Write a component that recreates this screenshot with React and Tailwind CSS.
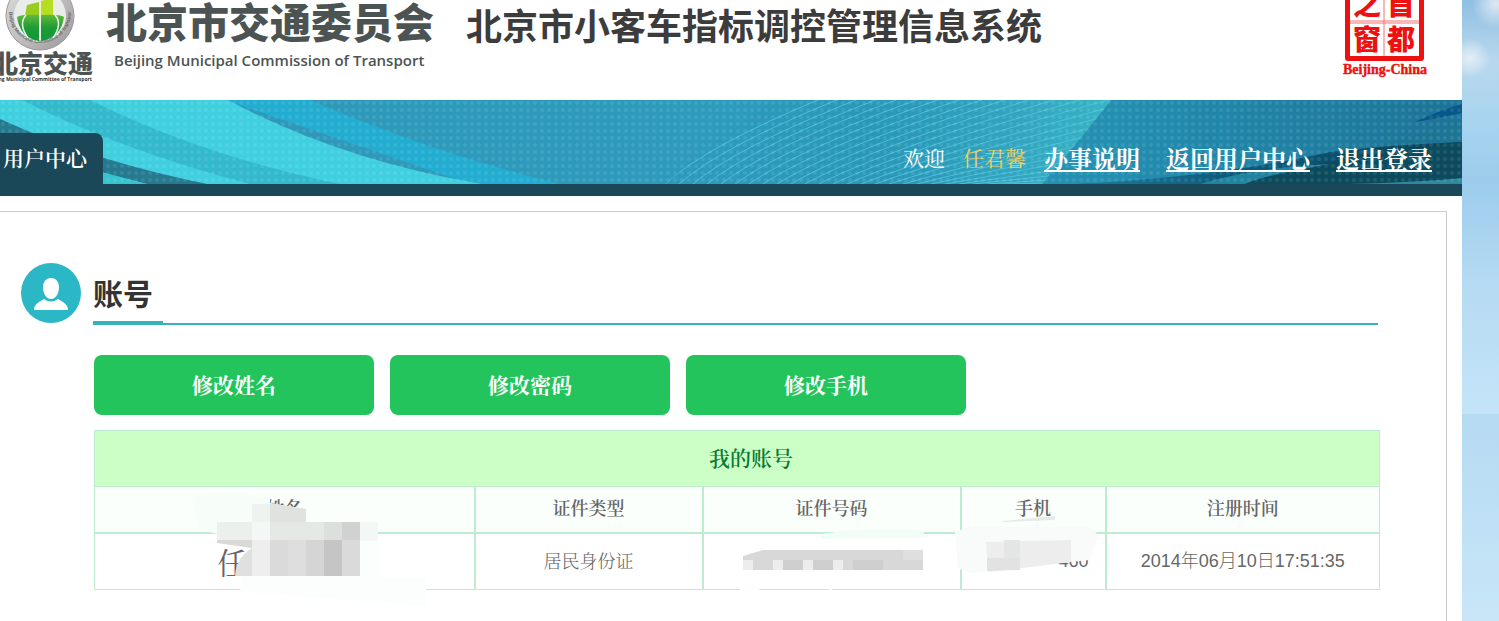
import React from "react";

const NAV_LINKS = ["办事说明", "返回用户中心", "退出登录"];
const ACTIONS = ["修改姓名", "修改密码", "修改手机"];
const LINES = Array.from({ length: 28 }, (_, i) => i);

const SONG = "font-['Noto_Serif_CJK_SC','Noto_Sans_CJK_SC',serif]";
const HEAD_CELL = "border-2 border-[#bdecd3] first:border-l last:border-r";
const BODY_CELL = "border-2 border-b border-[#bdecd3] first:border-l last:border-r";

const Emblem = () => (
  <svg width="94" height="84" viewBox="0 0 94 84" className="shrink-0">
    <defs>
      <linearGradient id="ring" x1="0" y1="0" x2="1" y2="1">
        <stop offset="0" stopColor="#dcdcdc" />
        <stop offset="0.5" stopColor="#c2c1c1" />
        <stop offset="1" stopColor="#999696" />
      </linearGradient>
      <linearGradient id="leaf" x1="0" y1="0" x2="0" y2="1">
        <stop offset="0" stopColor="#5fbb3a" />
        <stop offset="0.5" stopColor="#1f9a35" />
        <stop offset="1" stopColor="#0d9a3a" />
      </linearGradient>
    </defs>
    <circle cx="40" cy="16" r="34" fill="url(#ring)" stroke="#9a9898" strokeWidth="1" />
    <circle cx="40" cy="16" r="26" fill="#e9ece9" />
    <path id="arc" d="M9 12A31 31 0 0 0 71 12" fill="none" />
    <text fontSize="5" fontWeight="700" fill="#6b6868" fontFamily="Liberation Sans, sans-serif">
      <textPath href="#arc">Beijing Municipal Committee of Transport</textPath>
    </text>
    <path d="M27 5L39 2V16H25Z" fill="#98cc1e" />
    <path d="M41 1L53 -2V15H41Z" fill="#b5de20" />
    <path d="M17 17Q22 14 39 15V41Q20 38 17 17Z" fill="url(#leaf)" />
    <path d="M41 15Q60 14 64 17Q61 38 41 41Z" fill="url(#leaf)" />
    <path d="M26 15Q18 24 28 38M55 15Q63 24 53 38" stroke="#e8f6e8" strokeWidth="1.500" fill="none" />
    <text x="93" y="73" textAnchor="end" fontSize="25" fontWeight="900" fill="#4c5453" fontFamily="Noto Sans CJK SC, sans-serif">
      北京交通
    </text>
    <text x="92" y="81" textAnchor="end" fontSize="5" fontWeight="700" fill="#333" fontFamily="Open Sans, sans-serif">
      Beijing Municipal Committee of Transport
    </text>
  </svg>
);

const Seal = () => (
  <svg width="90" height="78" viewBox="0 0 90 78" className="shrink-0" fill="#ee1111">
    <path d="M5 -20H84V58Q84 61 81 61H8Q5 61 5 58Z" />
    <path d="M10 -20H79V56H10Z" fill="#fff" />
    <path d="M10 21H79M10 23H79M44 -20V56" stroke="#f47070" strokeWidth="1" />
    <g fontSize="28" fontWeight="900" fontFamily="Noto Sans CJK SC, sans-serif" textAnchor="middle">
      <text x="27" y="15">之</text>
      <text x="61" y="15">首</text>
      <text x="27" y="50">窗</text>
      <text x="61" y="50">都</text>
    </g>
    <text x="45" y="74" textAnchor="middle" fontSize="14" fontWeight="700" stroke="#ee1111" strokeWidth="0.4" fontFamily="Liberation Serif, serif">
      Beijing-China
    </text>
  </svg>
);

const BannerArt = () => (
  <svg
    className="absolute inset-0 h-full w-full"
    viewBox="0 0 1462 84"
    preserveAspectRatio="none"
    aria-hidden="true"
  >
    <defs>
      <linearGradient id="sea" x1="0" y1="0" x2="1" y2="0">
        <stop offset="0" stopColor="#2d97b8" />
        <stop offset="0.5" stopColor="#2d9bbd" />
        <stop offset="0.75" stopColor="#2390b2" />
        <stop offset="1" stopColor="#1c7397" />
      </linearGradient>
      <linearGradient id="deep" x1="0" y1="0" x2="1" y2="0">
        <stop offset="0" stopColor="#1d7c9e" />
        <stop offset="0.4" stopColor="#0b5a7c" />
        <stop offset="1" stopColor="#0a4357" />
      </linearGradient>
      <linearGradient id="fade" x1="0" y1="0" x2="1" y2="0">
        <stop offset="0" stopColor="#41b5cf" stopOpacity="0" />
        <stop offset="1" stopColor="#42c4cf" stopOpacity="0.7" />
      </linearGradient>
      <pattern id="dots" width="7" height="7" patternUnits="userSpaceOnUse">
        <circle cx="3" cy="3" r="2" fill="#fff" opacity="0.09" />
      </pattern>
      <clipPath id="fan">
        <path d="M665 84Q720 35 775 0H1111Q1080 40 1042 84Z" />
      </clipPath>
    </defs>
    <path d="M0 0H1462V84H0Z" fill="url(#sea)" />
    <path d="M225 0H310Q430 52 560 84H470Z" fill="#22acd0" />
    <path d="M0 0H228Q340 60 482 84H0Z" fill="#3fcfdf" />
    <path d="M22 0H90Q200 55 340 84H250Q120 50 22 0Z" fill="#33b9cc" />
    <path d="M0 19Q90 60 207 84H147Q70 65 0 40Z" fill="#257a90" />
    <path d="M0 40Q70 65 147 84H0Z" fill="#35c5cf" />
    <g clipPath="url(#fan)">
      <path d="M860 0H1111V84H860Z" fill="url(#fade)" />
      <g fill="none" stroke="#50c3da" strokeWidth="1" opacity="0.9">
        {LINES.map((i) => (
          <path key={i} d={`M${665 + i * 14} 84Q${745 + i * 14} ${i * 3 + 10} 1130 ${i * 8 - 110}`} />
        ))}
      </g>
    </g>
    <path d="M1075 84Q1290 76 1462 22V84Z" fill="#1d7595" />
    <path d="M1080 84Q1230 75 1330 52Q1400 44 1462 42V84Z" fill="url(#deep)" />
    <path d="M1200 84Q1330 60 1462 42V78Q1340 84 1320 84Z" fill="#0b4b5d" />
    <path d="M1200 84Q1250 68 1330 64Q1260 76 1245 84Z" fill="#2183a0" />
    <path d="M1350 84Q1420 82 1462 78V84Z" fill="#2f87a0" />
    <path d="M1415 22Q1440 10 1462 4V13Q1440 18 1415 22Z" fill="#06578a" />
    <path d="M0 0H1462V84H0Z" fill="url(#dots)" />
  </svg>
);

const UserBadge = () => (
  <svg width="60" height="60" viewBox="0 0 60 60" className="shrink-0" aria-hidden="true">
    <circle cx="30" cy="30" r="30" fill="#2cb7c6" />
    <path
      d="M30 15C35 15 38 19 38 24C38 30 35 36 30 36C25 36 22 30 22 24C22 19 25 15 30 15ZM13 47C13 42 16 40 23 36Q30 41 37 36C44 40 47 42 47 47Z"
      fill="#fff"
    />
  </svg>
);

// patches that hide the personal details
const NameMask = () => (
  <svg
    className="absolute -top-11 left-1/2 z-10 -translate-x-1/2"
    width="300"
    height="118"
    viewBox="134 490 300 118"
    aria-hidden="true"
  >
    <path d="M192 497Q235 490 252 497H270V503L306 509V522H378V540H245L200 530Z" fill="#f7fdf9" />
    <path d="M217 522H378V541H217Z" fill="#f3f7f5" />
    <path d="M246 541H380V577H426V606L240 592Z" fill="#fcfefd" />
    <path d="M252 504H270V522H252Z" fill="#eef3f0" />
    <path d="M270 503L306 509V522H270Z" fill="#dfe2df" />
    <path d="M217 522H252V540H217Z" fill="#ebf0ed" />
    <path d="M270 522H342V540H270Z" fill="#e4e9e6" />
    <path d="M324 522H342V540H324Z" fill="#dce0dd" />
    <path d="M342 522H360V540H342Z" fill="#cfd2d0" />
    <path d="M217 540H252V548L217 543Z" fill="#d9d9d9" />
    <path d="M252 548Q236 558 235 576H252Z" fill="#e0e0e0" />
    <path d="M252 540H270V576H252Z" fill="#eeeeef" />
    <path d="M270 540H288V576H270Z" fill="#dadada" />
    <path d="M288 540H306V576H288Z" fill="#dedede" />
    <path d="M306 540H324V576H306Z" fill="#d6d5d5" />
    <path d="M324 540H342V576H324Z" fill="#c5c5c5" />
    <path d="M342 540H360V576H342Z" fill="#dadada" />
  </svg>
);

const IdMask = () => (
  <svg
    className="absolute -top-1 left-1/2 z-10 -translate-x-1/2"
    width="200"
    height="62"
    viewBox="731 530 200 62"
    aria-hidden="true"
  >
    <path d="M820 534L850 530H920L927 538L820 539Z" fill="#f3fdf8" />
    <path d="M740 588L752 583L760 591L738 591ZM822 585L836 583L830 591Z" fill="#fdfefd" />
    <path d="M742 556L762 550H922V570H742Z" fill="#d8d8d8" />
    <path d="M742 560H752V570H742ZM772 560H782V570H772ZM802 560H812V570H802ZM832 560H842V570H832Z" fill="#ededed" />
    <path d="M782 560H802V570H782ZM812 560H832V570H812ZM852 560H882V570H852Z" fill="#cfcfcf" />
    <path d="M902 550H922V560H902Z" fill="#dfdfdf" />
  </svg>
);

const PhoneMask = () => (
  <svg
    className="absolute -top-5 left-1/2 z-10 -translate-x-1/2"
    width="162"
    height="70"
    viewBox="952 514 162 70"
    aria-hidden="true"
  >
    <path d="M1003 521L1055 516V520L1003 522Z" fill="#e6ebe8" />
    <path d="M955 532L970 527H1090L1098 535L1090 560L1060 563L970 573L958 568Z" fill="#f8fbfa" />
    <path d="M986 542L1071 540V562L988 572Z" fill="#ededee" />
    <path d="M1004 540H1020V558H1004Z" fill="#e4e5e5" />
    <path d="M987 558H1020V570L987 571Z" fill="#e2e2e2" />
  </svg>
);

const AccountTable = () => (
  <table
    className={`mt-[15px] w-full table-fixed border-collapse text-center text-lg text-[#666] ${SONG}`}
  >
    <colgroup>
      <col className="w-[380px]" />
      <col className="w-[228px]" />
      <col className="w-[258px]" />
      <col className="w-[145px]" />
      <col className="w-[274px]" />
    </colgroup>
    <thead>
      <tr className="h-14 bg-[#ccffc6] text-[21px] text-[#0a7a33]">
        <th colSpan={5} className="border border-[#bdecd3] pb-[2px] pl-7 font-semibold">
          我的账号
        </th>
      </tr>
      <tr className="h-[46px] bg-[#fafffb]">
        {["姓名", "证件类型", "证件号码", "手机", "注册时间"].map((label) => (
          <th key={label} className={`border-t pb-1 font-semibold ${HEAD_CELL}`}>
            {label}
          </th>
        ))}
      </tr>
    </thead>
    <tbody>
      <tr className="h-[57px] bg-white">
        <td className={`relative text-3xl ${BODY_CELL}`}>
          <span className="pr-26">任</span>
          <NameMask />
        </td>
        <td className={`pb-[2px] font-light ${BODY_CELL}`}>居民身份证</td>
        <td className={`relative ${BODY_CELL}`}>
          <IdMask />
        </td>
        <td className={`relative pr-4 text-right font-['Liberation_Sans',sans-serif] ${BODY_CELL}`}>
          460
          <PhoneMask />
        </td>
        <td className={`font-['Liberation_Sans','Noto_Sans_CJK_SC',sans-serif] font-light ${BODY_CELL}`}>
          2014年06月10日17:51:35
        </td>
      </tr>
    </tbody>
  </table>
);

const App = () => (
  <div className="flex min-h-screen overflow-hidden font-['Noto_Sans_CJK_SC',sans-serif]">
    <div className="flex min-w-0 flex-1 flex-col bg-white">
      <header className="flex h-[100px] items-start justify-between overflow-hidden pr-8">
        <div className="flex">
          <Emblem />
          <div className="ml-3 text-[#4c5453]">
            <p className="text-[41px] leading-10 font-black whitespace-nowrap">北京市交通委员会</p>
            <p className="mt-2 pl-2 font-['Open_Sans',sans-serif] text-[15px] leading-6 font-semibold whitespace-nowrap">
              Beijing Municipal Commission of Transport
            </p>
          </div>
          <h1 className="ml-8 text-4xl leading-12 font-bold whitespace-nowrap text-[#3c3c3c]">
            北京市小客车指标调控管理信息系统
          </h1>
        </div>
        <Seal />
      </header>

      <nav className={`relative border-b-12 border-[#1a4858] text-white ${SONG}`}>
        <BannerArt />
        <div className="relative flex h-[84px] items-end justify-between">
          <a
            href="#center"
            className="rounded-tr-lg bg-[#1a4858] pr-4 pb-[2px] pl-[3px] text-[21px] leading-[49px] font-semibold"
          >
            用户中心
          </a>
          <div className="flex items-center pr-[30px] pb-[2px] text-2xl leading-[49px] font-bold">
            <span className="text-[21px] font-normal">欢迎</span>
            <span className="mr-[18px] ml-[18px] text-[21px] font-normal text-[#f0cf60]">任君馨</span>
            <div className="flex gap-[26px]">
              {NAV_LINKS.map((label) => (
                <a key={label} href="#nav" className="underline decoration-2 underline-offset-2">
                  {label}
                </a>
              ))}
            </div>
          </div>
        </div>
      </nav>

      <main className="mt-[15px] mr-[15px] flex-1 border-t border-r border-[#ccc] pt-[51px] pr-[68px] pl-[21px]">
        <div className="flex gap-3">
          <UserBadge />
          <div className="flex flex-1 border-b-2 border-[#3cb1b8]">
            <h2 className="-mb-[2px] w-[70px] border-b-4 border-[#36b2bc] text-3xl leading-[58px] font-bold text-[#333]">
              账号
            </h2>
          </div>
        </div>
        <div className="mt-[30px] pl-[73px]">
          <div className={`flex gap-4 ${SONG}`}>
            {ACTIONS.map((label) => (
              <button
                key={label}
                type="button"
                className="h-[60px] w-[280px] cursor-pointer rounded-lg bg-[#24c45c] text-[21px] font-bold text-white"
              >
                {label}
              </button>
            ))}
          </div>
          <AccountTable />
        </div>
      </main>
    </div>
    <aside className="flex w-[37px] flex-col">
      <div className="h-[414px] bg-[radial-gradient(circle_at_8px_58px,#e4eef5_0,transparent_20px),radial-gradient(circle_at_34px_4px,#dfeaf3_0,transparent_24px),linear-gradient(#8fbfe2_0px,#b9d8ee_60px,#a8d4ef_120px,#9cccec_180px,#b5daf3_280px,#c5e4f8_414px)]" />
      <div className="flex-1 bg-linear-to-b from-[#b5daf2] to-[#c9e6f8]" />
    </aside>
  </div>
);

export default App;
